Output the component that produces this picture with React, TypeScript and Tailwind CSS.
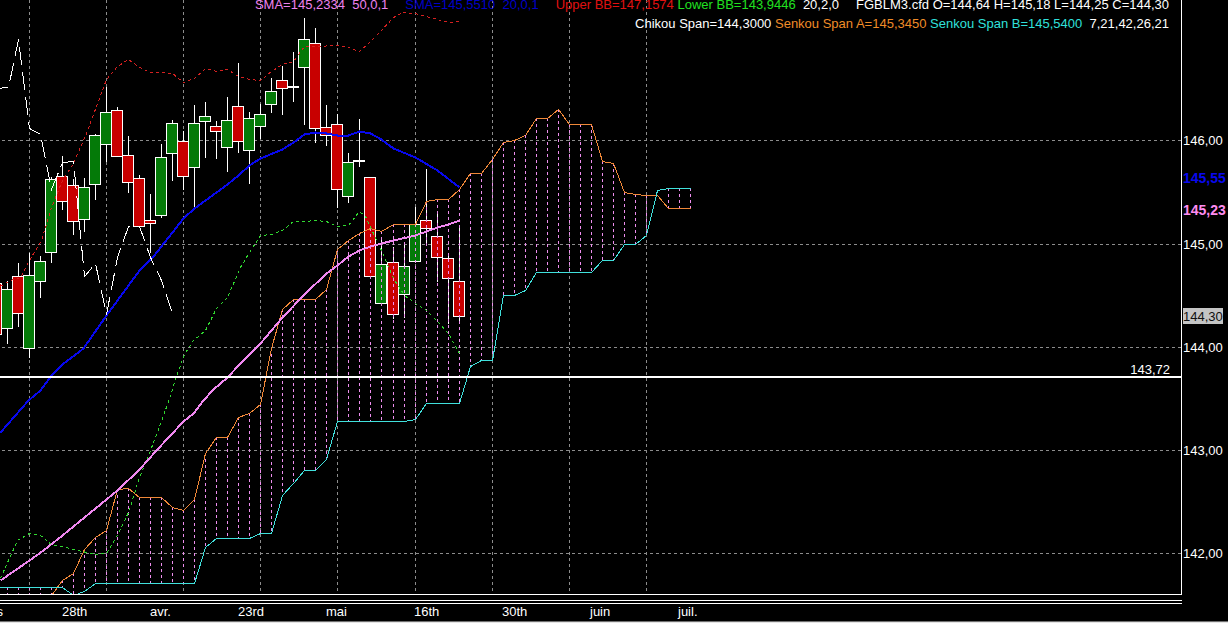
import React from 'react';

type Point = [number, number];

interface Candle {
    x: number;
    high: number;
    low: number;
    top: number;
    bottom: number;
    up: boolean;
}

// x, high, low, body top, body bottom, up
const candleRows: [number, number, number, number, number, boolean][] = [
    [-4, 283, 334, 283, 334, false],
    [7, 281, 343, 289, 328, true],
    [18, 263, 326, 276, 313, false],
    [29, 253, 357, 275, 348, true],
    [40, 256, 297, 261, 281, true],
    [51, 177, 262, 179, 252, true],
    [62, 156, 209, 176, 201, false],
    [73, 179, 234, 185, 221, false],
    [84, 178, 231, 187, 219, true],
    [95, 134, 199, 135, 184, true],
    [106, 87, 161, 112, 144, true],
    [117, 107, 156, 110, 156, false],
    [128, 136, 192, 155, 182, false],
    [139, 175, 226, 178, 226, false],
    [150, 194, 252, 220, 223, false],
    [161, 144, 217, 157, 215, true],
    [172, 120, 180, 123, 153, true],
    [183, 131, 189, 141, 176, false],
    [194, 105, 206, 123, 167, true],
    [205, 102, 157, 116, 121, true],
    [216, 121, 158, 126, 131, false],
    [227, 97, 171, 120, 147, true],
    [238, 63, 152, 106, 141, false],
    [249, 112, 183, 118, 150, true],
    [260, 104, 138, 114, 126, true],
    [271, 78, 112, 91, 104, true],
    [282, 66, 114, 80, 88, false],
    [293, 52, 101, 86, 87, true],
    [304, 18, 124, 39, 67, true],
    [315, 28, 142, 43, 128, false],
    [326, 105, 145, 127, 135, false],
    [337, 114, 207, 124, 189, false],
    [348, 153, 202, 162, 196, true],
    [359, 119, 166, 160, 161, true],
    [370, 177, 276, 177, 276, false],
    [381, 238, 303, 264, 303, true],
    [393, 247, 318, 262, 314, false],
    [404, 243, 317, 266, 294, true],
    [415, 207, 261, 224, 261, true],
    [426, 169, 244, 220, 228, false],
    [437, 211, 281, 236, 257, false],
    [448, 253, 323, 258, 278, false],
    [459, 225, 323, 281, 316, false],
];

const candles: Candle[] = candleRows.map(([x, high, low, top, bottom, up]) => ({ x, high, low, top, bottom, up }));

const upperBand: Point[] = [
    [0, 286], [10, 280], [20, 277], [29, 260], [41, 240], [51, 207], [62, 180], [73, 163], [86, 133], [96, 106],
    [106, 79], [117, 66], [128, 59], [139, 67], [150, 72], [161, 72], [172, 73], [183, 82], [194, 78], [205, 68],
    [216, 71], [227, 69], [238, 76], [249, 79], [260, 80], [271, 71], [282, 64], [293, 61], [304, 46], [315, 46],
    [337, 45], [348, 47], [359, 51], [370, 41], [381, 30], [393, 17], [402, 12], [415, 13], [426, 16], [448, 22], [459, 21],
];

const lowerBand: Point[] = [
    [0, 578], [8, 560], [17, 540], [29, 533], [40, 535], [51, 544], [62, 546], [73, 549], [95, 554], [106, 553],
    [117, 535], [128, 512], [139, 477], [150, 450], [161, 421], [169, 398], [177, 373], [184, 354], [193, 340],
    [205, 330], [216, 308], [227, 297], [240, 267], [249, 252], [260, 235], [271, 234], [282, 230], [293, 221],
    [304, 221], [315, 220], [326, 221], [337, 226], [348, 225], [359, 211], [365, 216], [373, 233], [381, 250],
    [393, 278], [404, 295], [415, 303], [426, 310], [437, 321], [448, 333], [459, 353],
];

const sma20: Point[] = [
    [0, 432], [28, 400], [40, 390], [51, 375], [62, 364], [83, 348], [106, 315], [139, 270], [153, 256], [172, 232],
    [183, 218], [194, 208], [205, 200], [227, 184], [238, 175], [249, 165], [260, 158], [282, 149], [293, 142],
    [304, 134], [315, 132], [326, 133], [337, 135], [348, 135], [359, 131], [370, 133], [381, 139], [393, 148],
    [415, 157], [437, 170], [459, 187],
];

const sma50: Point[] = [
    [0, 580], [29, 560], [43, 550], [62, 535], [73, 526], [95, 508], [117, 490], [139, 469], [156, 450], [183, 421],
    [193, 413], [203, 400], [213, 389], [227, 377], [240, 363], [260, 343], [282, 317], [304, 294], [326, 273],
    [337, 265], [348, 256], [359, 250], [370, 246], [381, 243], [393, 240], [415, 235], [426, 231], [437, 227],
    [448, 224], [459, 220],
];

const chikou: Point[] = [
    [-4, 88], [8, 87], [18, 39], [29, 128], [40, 134], [51, 189], [62, 162], [73, 161], [84, 276], [95, 263],
    [106, 314], [117, 257], [128, 226], [139, 226], [150, 257], [161, 280], [172, 313],
];

// x, Senkou Span A, Senkou Span B
const cloud: [number, number, number][] = [
    [-4, 640, 587], [7, 640, 587], [18, 640, 587], [29, 640, 587], [40, 610, 587], [51, 595, 587], [62, 580, 587],
    [73, 573, 595], [84, 549, 591], [95, 537, 583], [106, 530, 583], [117, 489, 583], [128, 488, 583], [139, 497, 583],
    [150, 497, 583], [161, 497, 583], [172, 507, 583], [183, 510, 583], [194, 499, 583], [205, 453, 547], [216, 437, 538],
    [227, 437, 538], [238, 417, 538], [249, 413, 538], [260, 404, 533], [271, 348, 533], [282, 309, 495], [293, 299, 483],
    [304, 299, 470], [315, 299, 470], [326, 289, 459], [337, 249, 421], [348, 240, 421], [359, 233, 421], [370, 228, 421],
    [381, 231, 421], [393, 224, 421], [404, 224, 421], [415, 224, 419], [426, 201, 403], [437, 199, 403], [448, 199, 403],
    [459, 189, 403], [470, 173, 366], [481, 173, 360], [492, 159, 360], [503, 142, 295], [514, 140, 295], [525, 135, 290],
    [536, 118, 272], [547, 118, 272], [558, 109, 272], [569, 124, 272], [580, 124, 272], [591, 124, 272], [602, 161, 260],
    [613, 163, 260], [624, 192, 244], [635, 194, 244], [646, 195, 235], [657, 195, 190], [668, 208, 188], [679, 208, 188],
    [690, 208, 188],
];

const spanA: Point[] = cloud.map(([x, a]) => [x, a]);
const spanB: Point[] = cloud.map(([x, , b]) => [x, b]);

const gridX = [29, 106, 183, 260, 337, 415, 492, 569, 646];

const prices = [
    { label: '146,00', y: 140 },
    { label: '145,00', y: 244 },
    { label: '144,00', y: 347 },
    { label: '143,00', y: 450 },
    { label: '142,00', y: 553 },
];

const dates = ['mars', '28th', 'avr.', '23rd', 'mai', '16th', '30th', 'juin', 'juil.'];

const toPoints = (points: Point[]) => points.map(([x, y]) => `${x + 0.5},${y + 0.5}`).join(' ');

interface LineProps {
    points: Point[];
    color: string;
    width?: number;
    dash?: string;
    offset?: number;
}

const Line: React.FC<LineProps> = ({ points, color, width = 1, dash, offset }) => (
    <polyline
        points={toPoints(points)}
        fill="none"
        stroke={color}
        strokeWidth={width}
        strokeDasharray={dash}
        strokeDashoffset={offset}
    />
);

const Plot: React.FC = () => (
    <svg className="min-w-0 flex-1 overflow-hidden text-[13px]" shapeRendering="crispEdges" role="img" aria-label="FGBLM3.cfd">
        {/* Grid */}
        <g stroke="#8c8c8c" strokeDasharray="3 3">
            {gridX.map((x) => (
                <line key={x} x1={x + 0.5} x2={x + 0.5} y1="0" y2="100%" />
            ))}
            {prices.map(({ y }) => (
                <line key={y} x1="2" x2="100%" y1={y + 0.5} y2={y + 0.5} />
            ))}
        </g>

        {/* Candles */}
        <g stroke="#ffffff">
            {candles.map(({ x, high, low, top, bottom, up }) => (
                <g key={x}>
                    <line x1={x + 0.5} x2={x + 0.5} y1={high} y2={low + 1} />
                    <rect x={x - 5.5} y={top + 0.5} width="11" height={bottom - top} fill={up ? '#047a08' : '#c80000'} />
                </g>
            ))}
        </g>

        {/* Ichimoku cloud */}
        <g stroke="#ee8eee" strokeDasharray="3 3">
            {cloud.map(([x, a, b]) => (
                <line key={x} x1={x + 0.5} x2={x + 0.5} y1={Math.min(a, b)} y2={Math.max(a, b)} />
            ))}
        </g>
        <Line points={spanA} color="#f08838" />
        <Line points={spanB} color="#40e0dc" />

        {/* Averages and bands */}
        <Line points={upperBand} color="#d42020" dash="3 3" />
        <Line points={lowerBand} color="#30d830" dash="3 3" />
        <Line points={sma20} color="#0808ee" width={2} />
        <Line points={sma50} color="#f088f0" width={2} />
        <Line points={chikou} color="#ffffff" dash="18 7" offset={6} />

        {/* Support level */}
        <line x1="0" x2="100%" y1="377" y2="377" stroke="#ffffff" strokeWidth="2" />
        <text x="100%" y="374" dx="-11" textAnchor="end" fill="#ffffff">143,72</text>
    </svg>
);

const Legend: React.FC = () => (
    <div className="absolute -top-[5px] right-3 flex flex-col items-end whitespace-pre text-[13px] leading-[19px]">
        <div className="flex gap-[17px]">
            <span className="text-[#ee82ee]">SMA=145,2334  50,0,1</span>
            <span className="text-[#0000c8]">SMA=145,5510  20,0,1</span>
            <span>
                <span className="text-[#e01010]">Upper BB=147,1574</span>{' '}
                <span className="text-[#20e020]">Lower BB=143,9446</span>{'  '}
                <span>20,2,0</span>
            </span>
            <span>FGBLM3.cfd O=144,64 H=145,18 L=144,25 C=144,30</span>
        </div>
        <div>
            <span>Chikou Span=144,3000</span>{' '}
            <span className="text-[#f08c28]">Senkou Span A=145,3450</span>{' '}
            <span className="text-[#30e0dc]">Senkou Span B=145,5400</span>{'  '}
            <span>7,21,42,26,21</span>
        </div>
    </div>
);

const PriceAxis: React.FC = () => (
    <svg className="w-[46px] shrink-0 text-[13px]" shapeRendering="crispEdges">
        {prices.map(({ label, y }) => (
            <text key={label} x="1" y={y + 5} fill="#ffffff">{label}</text>
        ))}
        <text x="1" y="183" fill="#0808ee" className="text-[14px] font-bold">145,55</text>
        <text x="1" y="215" fill="#ff8cf0" className="text-[14px] font-bold">145,23</text>
        <rect x="1" y="308" width="40" height="16" fill="#c4c4c4" />
        <text x="1" y="321" fill="#101010">144,30</text>
    </svg>
);

const TimeAxis: React.FC = () => (
    <div className="overflow-hidden pt-[5px] pr-[46px] pb-0.5">
        <div className="h-1 border-y border-white" />
        <div className="-ml-[26px] flex text-[13px] leading-[15px]">
            {dates.map((date) => (
                <span key={date} className="w-22 shrink-0">{date}</span>
            ))}
        </div>
    </div>
);

export default function App() {
    return (
        <div className="flex min-h-screen flex-col bg-[#e4e4e4] pb-px font-['Liberation_Sans',Arial,sans-serif] text-white">
            <main className="flex flex-1 flex-col border-b border-[#707070] bg-black">
                <div className="flex flex-1">
                    <div className="relative flex min-w-0 flex-1 overflow-hidden border-r border-b border-white">
                        <Plot />
                        <Legend />
                    </div>
                    <PriceAxis />
                </div>
                <TimeAxis />
            </main>
        </div>
    );
}
